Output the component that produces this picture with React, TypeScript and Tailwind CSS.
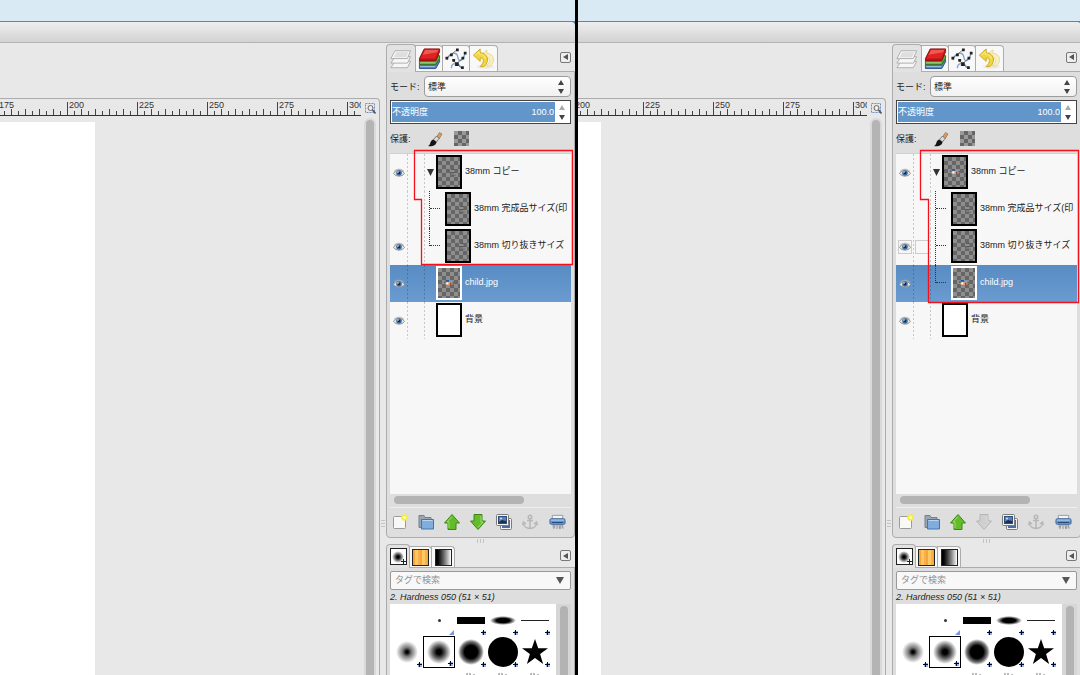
import { useState } from "react";
import type { ReactNode } from "react";

type Layer = {
  name: string;
  visible: boolean;
  depth: number;
  group?: boolean;
  art?: "child" | "marks" | "blank";
  hovered?: boolean;
};

const LAYERS_BEFORE: Layer[] = [
  { name: "38mm コピー", visible: true, depth: 0, group: true, art: "marks" },
  { name: "38mm 完成品サイズ(印", visible: false, depth: 1, art: "marks" },
  { name: "38mm 切り抜きサイズ", visible: true, depth: 1, art: "marks" },
  { name: "child.jpg", visible: true, depth: 0, art: "child" },
  { name: "背景", visible: true, depth: 0, art: "blank" },
];

const LAYERS_AFTER: Layer[] = [
  { name: "38mm コピー", visible: true, depth: 0, group: true, art: "child" },
  { name: "38mm 完成品サイズ(印", visible: false, depth: 1, art: "marks" },
  { name: "38mm 切り抜きサイズ", visible: true, depth: 1, art: "marks", hovered: true },
  { name: "child.jpg", visible: true, depth: 1, art: "child" },
  { name: "背景", visible: true, depth: 0, art: "blank" },
];

/* ---------- icons ---------- */

function LayersIcon() {
  return (
    <svg width="22" height="22" viewBox="0 0 24 24" fill="#f6f6f6" stroke="#ababab" strokeLinejoin="round">
      <path d="M1 21.500l4.500-7h17l-3.500 7z" />
      <path d="M1 16.500l4.500-7h17l-3.500 7z" />
      <path d="M1 11.500l4.500-8.500h17l-3.500 8.500z" />
      <path d="M4 10l3-5.500h13l-2.500 5.500z" fill="#dedede" stroke="none" />
    </svg>
  );
}

function ChannelsIcon() {
  return (
    <svg width="23" height="23" viewBox="0 0 24 24" strokeLinejoin="round">
      <path d="M1.500 19l4-6h17v2.500L18.500 22.500h-17z" fill="#4a7fc4" stroke="#2a5290" />
      <path d="M2 20.500h16" fill="none" stroke="#a9c6ea" />
      <path d="M1.500 15l4-6h17v3L18.500 18.500h-17z" fill="#5ea53a" stroke="#35691c" />
      <path d="M2 16.500h16" fill="none" stroke="#a8d88c" />
      <path d="M1.500 12l5-10h16v3L18.500 14.500h-17z" fill="#b81414" stroke="#8e1010" />
      <path d="M2.500 12l4.500-9.500h15L18 12z" fill="#e02222" />
      <path d="M5 8l2.500-5H21l-1 2.500z" fill="#ee5a52" />
    </svg>
  );
}

function PathsIcon() {
  return (
    <svg width="22" height="22" viewBox="0 0 24 24" fill="none">
      <path d="M2 13C5 4 13 4 14 10c1 7 6 4 8-5" stroke="#86a6d2" strokeWidth="1.500" />
      <path d="M7 22c0-7 8-6 10-1" stroke="#86a6d2" strokeWidth="1.500" />
      <path d="M2 11L13 2M8 13l10 9M11 19l9-9" stroke="#555" strokeWidth=".8" />
      <path
        d="M.5 9.500h3v3h-3zM5.500 6h3v3h-3zM12 .5h3v3h-3zM8 12h3v3H8zM11 15.500h4v4h-4zM17.500 20h3v3h-3zM18 9.500h3v3h-3zM20.500 4h3v3h-3z"
        fill="#222"
      />
    </svg>
  );
}

function UndoIcon() {
  return (
    <svg width="23" height="23" viewBox="0 0 24 24" strokeLinejoin="round">
      <ellipse cx="14" cy="20.500" rx="9" ry="2.500" fill="#ececec" />
      <path d="M9 8.500L15.500 3v3.500c8 .5 9 9 3.500 13.500h-4c5-5 4-8.500.5-8.500V14z" fill="#f8efbb" stroke="#e4d79c" />
      <path d="M1.500 8.500L8.500 2v4c8 .5 10.500 9 4 14.500h-4c5-5 4-9 0-9V15z" fill="#f3d63c" stroke="#cda820" />
      <path d="M3.500 8.500L7.500 5v2.500c4 0 6 2 6.500 5" fill="none" stroke="#fbeb8a" />
    </svg>
  );
}

function EyeIcon() {
  return (
    <svg width="12" height="10" viewBox="0 0 12 10">
      <path d="M.5 5.500C2.500 1.500 9 1 11.500 5.500 9 9 3 9 .5 5.500z" fill="#e4e4e0" stroke="#94948e" />
      <path d="M1 3.500C3.500.5 8.500.5 11 3.500" fill="none" stroke="#b0b0aa" />
      <circle cx="6" cy="5" r="2.800" fill="#3c6dab" />
      <circle cx="6" cy="5" r="1.300" fill="#14294a" />
      <circle cx="5" cy="4" r=".8" fill="#fff" />
    </svg>
  );
}

function PaintbrushIcon() {
  return (
    <svg width="16" height="16" viewBox="0 0 16 16">
      <path d="M9.500 6l3-4.500L15 3l-3 5z" fill="#d99a63" stroke="#8a6239" strokeWidth=".6" />
      <path d="M6.500 8.500l3-3.500L12 7.500l-2.500 3.500z" fill="#dcdcdc" stroke="#555" strokeWidth=".7" />
      <path d="M1 15c3-1 1.500-5 5-6.500L9.500 11C9 15 4 16 1 15z" fill="#151515" />
    </svg>
  );
}

function ZoomFitIcon() {
  return (
    <svg width="11" height="11" viewBox="0 0 11 11" fill="none">
      <path d="M.5.5h9v9h-9z" stroke="#6d8fc0" strokeDasharray="2 1" />
      <circle cx="5.500" cy="5" r="2.500" fill="#eee" stroke="#666" />
      <path d="M7.500 7l3 3.500" stroke="#555" strokeWidth="1.600" />
    </svg>
  );
}

function NewLayerIcon() {
  return (
    <svg width="16" height="16" viewBox="0 0 16 16">
      <rect x="1.500" y="2.500" width="12" height="12" rx="1" fill="#f8f8f6" stroke="#9a9a96" />
      <circle cx="12.500" cy="3.500" r="3.300" fill="#f7ee3c" />
      <circle cx="12.500" cy="3.500" r="1.300" fill="#fffde0" />
    </svg>
  );
}

function FolderIcon() {
  return (
    <svg width="16" height="16" viewBox="0 0 16 16" strokeLinejoin="round">
      <path d="M1 13.500v-12h5l1 2h6v10z" fill="#9aa5b3" stroke="#72808f" />
      <path d="M3.500 5.500h12v9.500h-12z" fill="#7fadde" stroke="#4474ad" />
      <path d="M4.500 6.500h10" stroke="#b9d5f3" />
    </svg>
  );
}

function ArrowIcon({ down, off }: { down?: boolean; off?: boolean }) {
  return (
    <svg width="16" height="16" viewBox="0 0 16 16" className={down ? "rotate-180" : ""}>
      <path
        d="M8 .5l7.500 8.500h-3.500v6.500h-8V9H.5z"
        fill={off ? "#cfcfcf" : "#62bd28"}
        stroke={off ? "#b5b5b5" : "#41851a"}
        strokeLinejoin="round"
      />
      <path d="M8 2.500L3 8h2v6" fill="none" stroke={off ? "#dadada" : "#9fde72"} />
    </svg>
  );
}

function DuplicateIcon() {
  return (
    <svg width="16" height="16" viewBox="0 0 16 16">
      <rect x="4.500" y="4.500" width="11" height="11" rx="1" fill="#f2f2f2" stroke="#7c7c7c" />
      <rect x="6" y="6" width="8" height="8" fill="#4a6ea4" />
      <rect x=".5" y=".5" width="12" height="11" rx="1" fill="#f2f2f2" stroke="#7c7c7c" />
      <rect x="2.500" y="2.500" width="8" height="7" fill="#5a80b8" stroke="#304d7c" />
      <path d="M3 8l3-2 4 1v2H3z" fill="#1c2f4e" />
      <circle cx="5" cy="4.500" r="1" fill="#d5e4f5" />
    </svg>
  );
}

function AnchorIcon() {
  return (
    <svg width="16" height="16" viewBox="0 0 16 16" fill="none" stroke="#b8b8b8" strokeWidth="1.600">
      <circle cx="8" cy="3" r="1.700" />
      <path d="M8 5v9M5 6.500h6M1.500 8.500c0 4 3 6 6.500 6s6.500-2 6.500-6M.5 11l1-3 2.500 2M15.500 11l-1-3-2.500 2" />
    </svg>
  );
}

function ShredderIcon() {
  return (
    <svg width="17" height="16" viewBox="0 0 18 16">
      <path d="M3.500 1h11v5h-11z" fill="#f4f4f4" stroke="#9a9a9a" />
      <rect x="1" y="4.500" width="16" height="6" rx="1.500" fill="#6797d0" stroke="#3c68a2" />
      <path d="M2 6h14" stroke="#b5d0f0" />
      <path d="M3 8.500h12" stroke="#27456f" />
      <path
        d="M4.500 11v3M6.500 11l-1.500 4.500M8.500 11v4.500M10.500 11l1 4.500M12.500 11v4M14 11l1 4"
        stroke="#8a8a8a"
        fill="none"
      />
    </svg>
  );
}

/* ---------- small shared parts ---------- */

function MenuButton() {
  return (
    <button
      aria-label="menu"
      className="flex size-[11px] items-center justify-center rounded-[2px] border border-[#777] bg-[#eee]"
    >
      <svg width="5" height="6" viewBox="0 0 5 6" fill="#555">
        <path d="M5 0v6L0 3z" />
      </svg>
    </button>
  );
}

function Triangle({ down, color = "#444" }: { down?: boolean; color?: string }) {
  return (
    <svg width="6" height="5" viewBox="0 0 6 5" fill={color} className={down ? "rotate-180" : ""}>
      <path d="M3 0l3 5H0z" />
    </svg>
  );
}

function Tab({ active, label, className, children }: { active?: boolean; label: string; className: string; children: ReactNode }) {
  return (
    <button
      aria-label={label}
      className={`flex items-center justify-center border border-b-0 border-[#acacac] ${
        active ? "z-10 -mb-px rounded-t-[4px] bg-[#e2e2e2]" : "-ml-px rounded-tr-[4px] bg-[#f8f8f8]"
      } ${className}`}
    >
      {children}
    </button>
  );
}

function DottedLine() {
  return (
    <span className="w-px shrink-0 bg-[repeating-linear-gradient(to_bottom,#0003_0_2px,transparent_2px_4px)]" />
  );
}

function Thumbnail({ layer, selected }: { layer: Layer; selected: boolean }) {
  return (
    <span
      className={`flex h-[34px] w-[26px] shrink-0 items-center justify-center border-2 ${
        selected ? "border-white" : "border-black"
      } ${
        layer.art === "blank"
          ? "bg-white"
          : "bg-[conic-gradient(#666_25%,#8e8e8e_0_50%,#666_0_75%,#8e8e8e_0)] bg-[length:8px_8px]"
      }`}
    >
      {layer.art === "child" && (
        <svg width="10" height="7" viewBox="0 0 12 8">
          <path d="M2 3h8v4H2z" fill="#d8b08f" />
          <path d="M2 1h4v2H2z" fill="#2456a8" />
          <path d="M6 1h3v2H6z" fill="#6ba0c8" />
          <path d="M3 4h2v2H3z" fill="#fff" />
          <path d="M7 4h2v3H7z" fill="#a03c30" />
          <path d="M0 3h2v1H0zM10 4h2v1h-2z" fill="#333" />
        </svg>
      )}
      {layer.art === "marks" && (
        <svg width="18" height="8" viewBox="0 0 18 8" fill="none" stroke="#5c5c5c">
          <path d="M7 4h1M11 1.500h4M10 4.500h6M12 7h4" />
          <path d="M10 3h5M11 6h5" stroke="#8f8f8f" />
        </svg>
      )}
    </span>
  );
}

/* ---------- canvas with ruler ---------- */

function RulerTicks({ count }: { count: number }) {
  return (
    <div className="flex h-full items-end">
      {Array.from({ length: count }, (_, i) => (
        <span
          key={i}
          className={`w-[7px] shrink-0 border-l border-[#444] ${i === 0 ? "h-[13px]" : i % 2 ? "h-1" : "h-[6px]"}`}
        />
      ))}
    </div>
  );
}

function Ruler({ marks }: { marks: number[] }) {
  return (
    <div className="flex h-[17px] justify-end overflow-hidden border-b border-[#333] text-[#333]">
      {marks.map((n) => (
        <div key={n} className="relative w-[70px] shrink-0">
          <span className="absolute top-px left-[2px] leading-[10px]">{n}</span>
          <RulerTicks count={10} />
        </div>
      ))}
      <div className="relative w-[14px] shrink-0 overflow-hidden">
        <span className="absolute top-px left-[2px] leading-[10px]">300</span>
        <RulerTicks count={2} />
      </div>
    </div>
  );
}

function Canvas({ marks }: { marks: number[] }) {
  return (
    <div className="mt-[55px] flex min-w-0 flex-1 rounded-tr-[4px] border-t border-r border-[#acacac]">
      <div className="flex min-w-0 flex-1 flex-col">
        <Ruler marks={marks} />
        <div className="mt-[6px] flex flex-1">
          <div className="flex-1 bg-white" />
          <div className="w-[266px] shrink-0" />
        </div>
      </div>
      <div className="flex w-[18px] flex-col items-center">
        <button aria-label="zoom" className="mt-1 mb-1">
          <ZoomFitIcon />
        </button>
        <div className="flex w-3 flex-1 justify-center rounded-t-full bg-[#d9d9d9] pt-[2px]">
          <div className="w-2 rounded-t-full bg-[#b4b4b4]" />
        </div>
      </div>
    </div>
  );
}

/* ---------- layers dock ---------- */

type RowProps = {
  layer: Layer;
  selected: boolean;
  lastChild: boolean;
  onSelect: () => void;
  onToggle: () => void;
};

function LayerRow({ layer, selected, lastChild, onSelect, onToggle }: RowProps) {
  return (
    <div
      onClick={onSelect}
      className={`flex h-[37px] ${selected ? "bg-linear-to-b from-[#588cc2] to-[#6a9bd1] text-white" : "text-[#222]"}`}
    >
      <span className="flex w-[17px] shrink-0 items-center justify-center">
        <button
          aria-label={`${layer.name} 表示`}
          onClick={onToggle}
          className={`flex size-[14px] items-center justify-center ${layer.hovered ? "border border-[#ccc]" : ""}`}
        >
          {layer.visible && <EyeIcon />}
        </button>
      </span>
      <DottedLine />
      <span className="flex w-4 shrink-0 items-center justify-center">
        {layer.hovered && <span className="size-[14px] border border-[#ccc]" />}
      </span>
      <DottedLine />
      {layer.depth === 0 && (
        <span className="flex w-[11px] shrink-0 items-center justify-center">
          {layer.group && (
            <svg width="7" height="7" viewBox="0 0 7 7" fill="#333">
              <path d="M0 0h7L3.500 7z" />
            </svg>
          )}
        </span>
      )}
      {layer.depth > 0 && (
        <span className="flex w-5 shrink-0 pl-1">
          <span className={`border-l border-dotted border-[#333] ${lastChild ? "h-[18px]" : ""}`} />
          <span className="h-[18px] w-[10px] border-b border-dotted border-[#333]" />
        </span>
      )}
      <span className="flex min-w-0 items-center gap-[3px] pb-[2px]">
        <Thumbnail layer={layer} selected={selected} />
        <span className="pb-[2px] whitespace-nowrap">{layer.name}</span>
      </span>
    </div>
  );
}

function LayersPanel({ layers: initial, outline, canLower, id }: { layers: Layer[]; outline: string; canLower: boolean; id: string }) {
  const [layers, setLayers] = useState(initial);
  const [selected, setSelected] = useState(3);
  const [opacity, setOpacity] = useState("100.0");

  function toggle(index: number) {
    setLayers(layers.map((l, i) => (i === index ? { ...l, visible: !l.visible } : l)));
  }

  return (
    <section className="flex min-h-0 flex-1 flex-col">
      <div className="flex h-7 items-end">
        <Tab active label="レイヤー" className="h-7 w-[30px]">
          <LayersIcon />
        </Tab>
        <Tab label="チャンネル" className="h-[26px] w-7">
          <ChannelsIcon />
        </Tab>
        <Tab label="パス" className="h-[26px] w-7">
          <PathsIcon />
        </Tab>
        <Tab label="作業履歴" className="h-[26px] w-[29px]">
          <UndoIcon />
        </Tab>
        <div className="mr-1 ml-auto flex h-full items-center">
          <MenuButton />
        </div>
      </div>
      <div className="flex flex-1 flex-col rounded-b-[4px] border border-[#acacac] bg-[#dedede] px-[3px] pt-1">
        <div className="flex items-center">
          <label htmlFor={`${id}-mode`} className="w-[34px] whitespace-nowrap">
            モード:
          </label>
          <div className="relative flex-1">
            <select
              id={`${id}-mode`}
              className="block h-[21px] w-full appearance-none rounded-[4px] border border-[#9c9c9c] bg-linear-to-b from-white to-[#f1f1f1] pl-[3px]"
            >
              <option>標準</option>
            </select>
            <span className="pointer-events-none absolute top-1 right-[7px] flex flex-col gap-[4px]">
              <Triangle />
              <Triangle down />
            </span>
          </div>
        </div>
        <div className="mt-[3px] flex h-6 border border-[#444] bg-white p-px">
          <div className="flex min-w-0 flex-1 items-center bg-[#6296cb] pr-px text-white">
            <label htmlFor={`${id}-opacity`}>不透明度</label>
            <input
              id={`${id}-opacity`}
              value={opacity}
              onChange={(e) => setOpacity(e.target.value)}
              className="min-w-0 flex-1 bg-transparent text-right outline-none"
            />
          </div>
          <div className="flex w-[14px] flex-col items-center justify-around">
            <button aria-label="増やす">
              <Triangle color="#aaa" />
            </button>
            <button aria-label="減らす">
              <Triangle down />
            </button>
          </div>
        </div>
        <div className="flex h-[29px] items-center">
          <span className="w-[37px]">保護:</span>
          <button aria-label="ピクセルを保護">
            <PaintbrushIcon />
          </button>
          <button
            aria-label="透明部分を保護"
            className="ml-[11px] size-[15px] bg-[conic-gradient(#666_25%,#999_0_50%,#666_0_75%,#999_0)] bg-[length:8px_8px]"
          />
        </div>
        <div className="relative flex flex-1 flex-col border-t border-[#d0d0d0] bg-[#f7f7f7]">
          <div className="flex-1">
            {layers.map((layer, i) => (
              <LayerRow
                key={layer.name}
                layer={layer}
                selected={i === selected}
                lastChild={layer.depth > 0 && layers[i + 1].depth === 0}
                onSelect={() => setSelected(i)}
                onToggle={() => toggle(i)}
              />
            ))}
          </div>
          <div className="flex h-[14px] items-center border-b border-[#eee] bg-[#dedede] px-1 pb-px">
            <div className="h-2 w-[130px] rounded-full bg-[#b3b3b3]" />
          </div>
          {/* red outline around the layer group */}
          <svg
            className="pointer-events-none absolute -top-[5px] left-0 overflow-visible"
            width="184"
            height="156"
            fill="none"
            stroke="#f5101c"
            strokeWidth="1.300"
          >
            <path d={outline} />
          </svg>
        </div>
        <div className="flex h-[29px] items-center gap-[10px] pb-[2px] pl-[2px]">
          <button aria-label="新しいレイヤー"><NewLayerIcon /></button>
          <button aria-label="新しいレイヤーグループ"><FolderIcon /></button>
          <button aria-label="前面へ"><ArrowIcon /></button>
          <button aria-label="背面へ" disabled={!canLower}><ArrowIcon down off={!canLower} /></button>
          <button aria-label="複製"><DuplicateIcon /></button>
          <button aria-label="固定" disabled><AnchorIcon /></button>
          <button aria-label="削除" className="mr-[5px] ml-auto"><ShredderIcon /></button>
        </div>
      </div>
    </section>
  );
}

/* ---------- brushes dock ---------- */

function BrushCell({ name, mark, selected, children }: { name: string; mark?: "plus" | "corner"; selected?: boolean; children?: ReactNode }) {
  return (
    <button
      aria-label={name}
      className={`relative flex size-8 items-center justify-center ${selected ? "border border-black" : ""}`}
    >
      {children}
      {mark === "plus" && (
        <svg className="absolute right-px bottom-px" width="5" height="5" viewBox="0 0 5 5">
          <path d="M1 1h4v4H1z" fill="#9db2ee" />
          <path d="M2 0h1v2h2v1H3v2H2V3H0V2h2z" fill="#000a30" />
        </svg>
      )}
      {mark === "corner" && (
        <svg className="absolute right-px bottom-px" width="5" height="5" viewBox="0 0 5 5" fill="#7c93ea">
          <path d="M5 0v5H0z" />
        </svg>
      )}
    </button>
  );
}

function BrushGrid() {
  return (
    <div className="grid flex-1 auto-rows-[32px] grid-cols-[repeat(5,32px)] bg-white pl-px">
      <BrushCell name="Clipboard" />
      <BrushCell name="Pixel" mark="corner">
        <span className="size-[3px] rounded-full bg-[#333]" />
      </BrushCell>
      <BrushCell name="Block 01" mark="plus">
        <span className="h-[7px] w-7 bg-black" />
      </BrushCell>
      <BrushCell name="Ellipse" mark="plus">
        <span className="h-[9px] w-[26px] rounded-[50%] bg-[radial-gradient(closest-side,#000_50%,transparent)]" />
      </BrushCell>
      <BrushCell name="Line" mark="plus">
        <span className="h-px w-7 bg-[#222]" />
      </BrushCell>
      <BrushCell name="Hardness 025" mark="plus">
        <span className="size-[22px] rounded-full bg-[radial-gradient(closest-side,#000_10%,#0008_40%,transparent)]" />
      </BrushCell>
      <BrushCell name="Hardness 050" mark="plus" selected>
        <span className="size-6 rounded-full bg-[radial-gradient(closest-side,#000_20%,#0009_55%,transparent)]" />
      </BrushCell>
      <BrushCell name="Hardness 075" mark="plus">
        <span className="size-[26px] rounded-full bg-[radial-gradient(closest-side,#000_50%,#0008_80%,transparent)]" />
      </BrushCell>
      <BrushCell name="Hardness 100" mark="plus">
        <span className="size-[30px] shrink-0 rounded-full bg-black" />
      </BrushCell>
      <BrushCell name="Star" mark="plus">
        <svg width="26" height="26" viewBox="0 0 26 26">
          <path d="M13 0l3.200 9.200H26l-7.900 5.900 3 9.900-8.100-6-8.100 6 3-9.900L0 9.200h9.800z" />
        </svg>
      </BrushCell>
      <BrushCell name="Acrylic 01" />
      <BrushCell name="Acrylic 02" />
      {["Acrylic 03", "Acrylic 04", "Acrylic 05"].map((name) => (
        <BrushCell key={name} name={name}>
          <svg width="16" height="22" viewBox="0 0 16 22" stroke="#777">
            <path d="M4 0v2M7 0v3M11 1v5M9 4v9M5 6v10" />
          </svg>
        </BrushCell>
      ))}
    </div>
  );
}

function BrushesPanel({ id }: { id: string }) {
  return (
    <section className="flex h-[131px] shrink-0 flex-col overflow-hidden">
      <div className="flex h-[23px] shrink-0 items-end">
        <Tab active label="ブラシ" className="h-6 w-6">
          <span className="relative flex size-[17px] items-center justify-center border border-[#222] bg-white">
            <span className="size-3 rounded-full bg-[radial-gradient(closest-side,#000_20%,transparent)]" />
            <svg className="absolute right-0 bottom-0" width="5" height="5" viewBox="0 0 5 5" fill="#0a1c66">
              <path d="M2 0h1v2h2v1H3v2H2V3H0V2h2z" />
            </svg>
          </span>
        </Tab>
        <Tab label="パターン" className="h-[21px] w-[23px]">
          <span className="size-[17px] border border-[#222] bg-[repeating-linear-gradient(to_right,#f5a53c_0_2px,#ffc862_2px_5px,#f9b04a_5px_7px)]" />
        </Tab>
        <Tab label="グラデーション" className="h-[21px] w-6">
          <span className="size-[17px] border border-[#222] bg-linear-to-r from-black to-white" />
        </Tab>
        <div className="mr-1 ml-auto flex h-full items-center">
          <MenuButton />
        </div>
      </div>
      <div className="flex flex-1 flex-col border border-b-0 border-[#acacac] bg-[#dedede] px-[3px] pt-[3px]">
        <div className="flex h-[19px] shrink-0 items-center rounded-[2px] border border-[#999] bg-[#f8f8f8] pr-[6px] pb-px pl-1">
          <input
            id={`${id}-tag`}
            aria-label="タグで検索"
            placeholder="タグで検索"
            className="min-w-0 flex-1 bg-transparent outline-none placeholder:text-[#909090]"
          />
          <button aria-label="タグ一覧">
            <svg width="8" height="7" viewBox="0 0 8 7" fill="#555">
              <path d="M0 0h8L4 7z" />
            </svg>
          </button>
        </div>
        <p className="h-[14px] shrink-0 leading-[14px] whitespace-nowrap italic">2. Hardness 050 (51 × 51)</p>
        <div className="flex min-h-0 flex-1 overflow-hidden">
          <BrushGrid />
          <div className="flex w-[15px] justify-center bg-[#d6d6d6] pt-[2px]">
            <div className="w-2 rounded-t-full bg-[#b3b3b3]" />
          </div>
        </div>
      </div>
    </section>
  );
}

/* ---------- window ---------- */

type WindowProps = {
  id: string;
  layers: Layer[];
  marks: number[];
  outline: string;
  canLower: boolean;
};

function GimpWindow({ id, layers, marks, outline, canLower }: WindowProps) {
  return (
    <div className="flex h-full flex-col bg-[#e8e8e8]">
      <div className="h-[21px] shrink-0 bg-[#d9eaf4]" />
      <div className="shrink-0 bg-[#5c8799] pt-px">
        <div className="h-[21px] rounded-tr-[4px] border-b border-[#b4b4b4] bg-linear-to-b from-[#eeeeee] to-[#d3d3d3]" />
      </div>
      <div className="flex min-h-0 flex-1">
        <Canvas marks={marks} />
        <div className="flex w-[6px] shrink-0 flex-col items-center gap-[2px] pt-[477px]">
          <span className="h-px w-1 bg-[#c4c4c4]" />
          <span className="h-px w-1 bg-[#c4c4c4]" />
          <span className="h-px w-1 bg-[#c4c4c4]" />
        </div>
        <aside className="flex w-[189px] shrink-0 flex-col">
          <LayersPanel layers={layers} outline={outline} canLower={canLower} id={id} />
          <div className="flex h-[6px] shrink-0 items-center justify-center gap-[2px]">
            <span className="h-1 w-px bg-[#c4c4c4]" />
            <span className="h-1 w-px bg-[#c4c4c4]" />
            <span className="h-1 w-px bg-[#c4c4c4]" />
          </div>
          <BrushesPanel id={id} />
        </aside>
      </div>
    </div>
  );
}

function App() {
  return (
    <main
      lang="ja"
      className="flex h-screen overflow-hidden font-['Liberation_Sans','Noto_Sans_CJK_JP',sans-serif] text-[9px] leading-3 text-[#222]"
    >
      <div className="min-w-0 grow-[575] basis-0 overflow-hidden">
        <GimpWindow
          id="before"
          layers={LAYERS_BEFORE}
          marks={[175, 200, 225, 250, 275]}
          canLower
          outline="M24.500 1.500H182.500V115.500H31.500V50.500H24.500z"
        />
      </div>
      <div className="w-[3px] shrink-0 bg-black" />
      <div className="min-w-0 grow-[502] basis-0 overflow-hidden">
        <div className="-mr-px h-full">
          <GimpWindow
            id="after"
            layers={LAYERS_AFTER}
            marks={[200, 225, 250, 275]}
            canLower={false}
            outline="M24.500 1.500H182.500V153.500H32.500V50.500H24.500z"
          />
        </div>
      </div>
    </main>
  );
}

export default App;
